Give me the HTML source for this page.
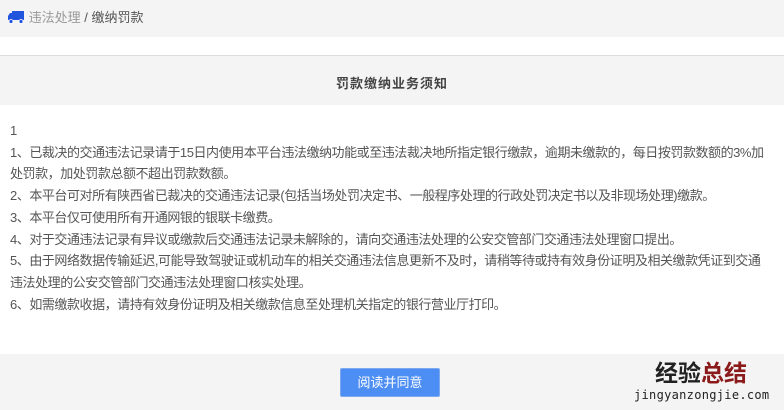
<!DOCTYPE html>
<html><head><meta charset="utf-8"><style>
*{margin:0;padding:0;box-sizing:border-box}
body{width:784px;height:410px;overflow:hidden;background:#f4f4f4;font-family:"Liberation Sans","Noto Sans CJK SC",sans-serif;color:#555;font-size:13px}
.top{position:absolute;left:0;top:0;width:784px;height:37px;background:#f4f4f4}
.crumb{position:absolute;left:7px;top:10px;font-size:13px;color:#999;line-height:16px}
.crumb b{font-weight:normal;color:#555}
.w1{position:absolute;top:37px;left:0;width:784px;height:19px;background:#fff;border-bottom:1px solid #ddd}
.title{position:absolute;top:73px;left:0;width:784px;text-align:center;font-weight:bold;font-size:13px;color:#444;letter-spacing:1px}
.content{position:absolute;top:105px;left:0;width:784px;height:249px;background:#fff;padding:15px 16px 0 10px;line-height:21.7px;font-size:13px;color:#555;letter-spacing:-0.45px}
.btn{position:absolute;left:340px;top:368px;width:100px;height:29px;background:#4d8ef5;border:1px solid #7ba8ee;border-radius:2px;color:#fff;text-align:center;line-height:27px;font-size:13px}
.wm{position:absolute;left:655px;top:361px;font-size:23px;line-height:24px;font-weight:bold;color:#222;letter-spacing:0}
.wm span{color:#8b1a1a}
.wm2{position:absolute;left:634px;top:388px;font-size:12px;line-height:14px;font-family:"DejaVu Sans Mono",monospace;color:#222;letter-spacing:0.3px}
</style></head><body>
<div class="top"></div>
<div class="crumb"><svg width="18" height="14" viewBox="0 0 18 14" style="vertical-align:-2px"><rect x="5" y="1" width="12" height="9" fill="#2255dd"/><path d="M1 6 L3 3 H5 V10 H1 Z" fill="#2255dd"/><circle cx="4" cy="11.5" r="2" fill="#2255dd" stroke="#fff" stroke-width="0.8"/><circle cx="14" cy="11.5" r="2" fill="#2255dd" stroke="#fff" stroke-width="0.8"/></svg> 违法处理 <b>/ 缴纳罚款</b></div>
<div class="w1"></div>
<div class="title">罚款缴纳业务须知</div>
<div class="content">1<br>1、已裁决的交通违法记录请于15日内使用本平台违法缴纳功能或至违法裁决地所指定银行缴款，逾期未缴款的，每日按罚款数额的3%加处罚款，加处罚款总额不超出罚款数额。<br>2、本平台可对所有陕西省已裁决的交通违法记录(包括当场处罚决定书、一般程序处理的行政处罚决定书以及非现场处理)缴款。<br>3、本平台仅可使用所有开通网银的银联卡缴费。<br>4、对于交通违法记录有异议或缴款后交通违法记录未解除的，请向交通违法处理的公安交管部门交通违法处理窗口提出。<br>5、由于网络数据传输延迟,可能导致驾驶证或机动车的相关交通违法信息更新不及时，请稍等待或持有效身份证明及相关缴款凭证到交通违法处理的公安交管部门交通违法处理窗口核实处理。<br>6、如需缴款收据，请持有效身份证明及相关缴款信息至处理机关指定的银行营业厅打印。</div>
<div class="btn">阅读并同意</div>
<div class="wm">经验<span>总结</span></div>
<div class="wm2">jingyanzongjie.com</div>
</body></html>
